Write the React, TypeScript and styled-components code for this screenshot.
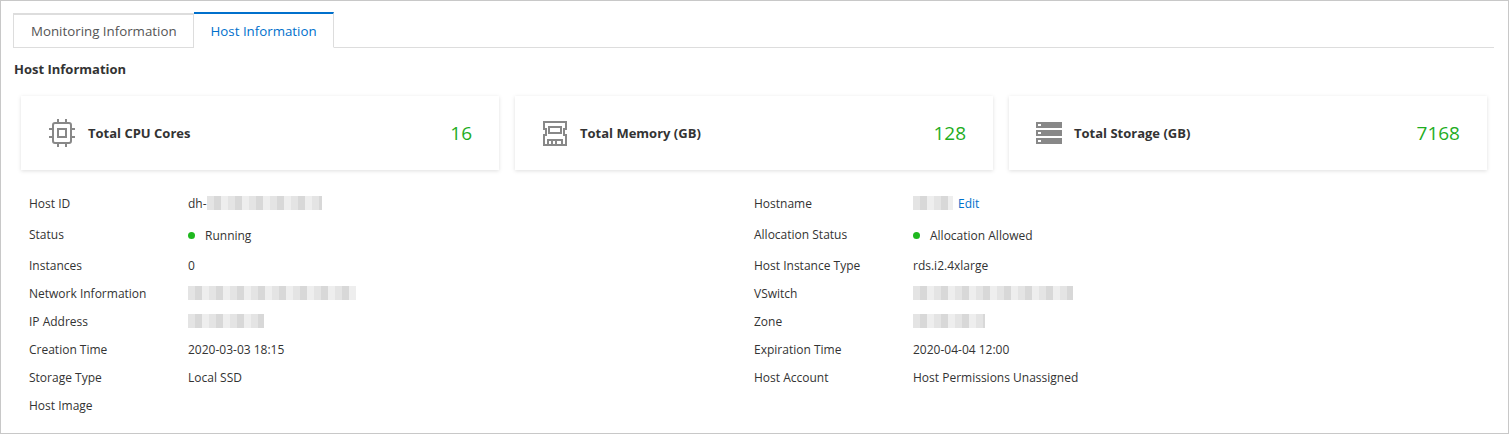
import React from 'react';
import styled, { createGlobalStyle } from 'styled-components';

const Global = createGlobalStyle`
  html, body { margin: 0; padding: 0; background: #fff; }
  body { font-family: "Segoe UI", "Open Sans", "Liberation Sans", sans-serif; color: #333; }
`;

const Frame = styled.div`
  width: 1509px;
  height: 434px;
  box-sizing: border-box;
  border: 1px solid #c8c8c8;
  padding: 11px 14px 0 12px;
  overflow: hidden;
`;

const Tabs = styled.div`
  display: flex;
  border-bottom: 1px solid #ddd;
  height: 35px;
`;

const Tab = styled.div<{ active?: boolean }>`
  box-sizing: border-box;
  padding: 0 16px 0 17px;
  display: flex;
  align-items: center;
  font-size: 13.3px;
  color: ${p => (p.active ? '#0070cc' : '#555')};
  border: 1px solid #ddd;
  border-top: 2px solid ${p => (p.active ? '#0070cc' : '#ddd')};
  border-bottom: ${p => (p.active ? '1px solid #fff' : '1px solid #ddd')};
  border-left: ${p => (p.active ? 'none' : '1px solid #ddd')};
  background: #fff;
  margin-top: ${p => (p.active ? '0' : '1px')};
  height: ${p => (p.active ? '36px' : '35px')};
`;

const Heading = styled.div`
  font-size: 13px;
  font-weight: 700;
  color: #333;
  margin: 13px 0 0 1px;
  line-height: 16px;
`;

const Cards = styled.div`
  display: grid;
  grid-template-columns: repeat(3, 478px);
  gap: 16px;
  margin: 19px 0 0 8px;
`;

const Card = styled.div`
  height: 74px;
  box-shadow: 0 1px 4px rgba(0, 0, 0, 0.13);
  display: flex;
  align-items: center;
  padding: 0 27px 0 27px;
`;

const CardTitle = styled.div`
  flex: 1;
  margin-left: 12px;
  font-size: 13px;
  font-weight: 700;
  color: #333;
`;

const CardValue = styled.div`
  font-size: 19px;
  color: #1fad1f;
`;

const Details = styled.div`
  display: grid;
  grid-template-columns: 725px 1fr;
  margin: 19px 0 0 16px;
`;

const Column = styled.div`
  display: flex;
  flex-direction: column;
`;

const Row = styled.div<{ tall?: boolean }>`
  display: flex;
  align-items: center;
  height: ${p => (p.tall ? '34px' : '28px')};
  font-size: 12px;
  color: #333;
`;

const Label = styled.div`
  width: 159px;
`;

const Value = styled.div<{ tall?: boolean }>`
  display: flex;
  align-items: center;
  margin-top: ${p => (p.tall ? '3px' : '0')};
`;

const Dot = styled.span`
  width: 7px;
  height: 7px;
  border-radius: 50%;
  background: #1fb81f;
  margin-right: 10px;
`;

const Blur = styled.span<{ w: number }>`
  display: inline-block;
  width: ${p => p.w}px;
  height: 14px;
  background:
    repeating-linear-gradient(90deg, #e4e4e4 0 7px, #d8d8d8 7px 14px, #eeeeee 14px 21px),
    #e0e0e0;
`;

const EditLink = styled.span`
  color: #0070cc;
  margin-left: 5px;
`;

const CpuIcon = () => (
  <svg width="28" height="30" viewBox="0 0 28 30" fill="none" stroke="#888" strokeWidth="2">
    <rect x="5" y="5" width="18" height="20" rx="2" />
    <rect x="10" y="11" width="8" height="8" />
    <path d="M10 1v4M18 1v4M10 25v4M18 25v4M1 11h4M1 19h4M23 11h4M23 19h4" />
  </svg>
);

const MemIcon = () => (
  <svg width="26" height="26" viewBox="0 0 26 26" fill="none" stroke="#888" strokeWidth="2">
    <path d="M2 2h22v7h-2v6h2v10H2V15h2V9H2z" />
    <rect x="7" y="7" width="12" height="6" />
    <path d="M6 25v-5h14v5M10 20v5M14 20v5" />
  </svg>
);

const StorageIcon = () => (
  <svg width="26" height="22" viewBox="0 0 26 22">
    <rect x="0" y="0" width="26" height="6" fill="#888" />
    <rect x="0" y="8" width="26" height="6" fill="#888" />
    <rect x="0" y="16" width="26" height="6" fill="#888" />
    <rect x="2" y="2" width="3" height="2" fill="#fff" />
    <rect x="2" y="10" width="3" height="2" fill="#fff" />
    <rect x="2" y="18" width="3" height="2" fill="#fff" />
  </svg>
);

const cards = [
  { icon: <CpuIcon />, title: 'Total CPU Cores', value: '16' },
  { icon: <MemIcon />, title: 'Total Memory (GB)', value: '128' },
  { icon: <StorageIcon />, title: 'Total Storage (GB)', value: '7168' },
];

export default function App() {
  return (
    <>
      <Global />
      <Frame>
        <Tabs>
          <Tab>Monitoring Information</Tab>
          <Tab active>Host Information</Tab>
        </Tabs>
        <Heading>Host Information</Heading>
        <Cards>
          {cards.map(c => (
            <Card key={c.title}>
              {c.icon}
              <CardTitle>{c.title}</CardTitle>
              <CardValue>{c.value}</CardValue>
            </Card>
          ))}
        </Cards>
        <Details>
          <Column>
            <Row><Label>Host ID</Label><Value>dh-<Blur w={115} /></Value></Row>
            <Row tall><Label>Status</Label><Value tall><Dot />Running</Value></Row>
            <Row><Label>Instances</Label><Value>0</Value></Row>
            <Row><Label>Network Information</Label><Value><Blur w={168} /></Value></Row>
            <Row><Label>IP Address</Label><Value><Blur w={76} /></Value></Row>
            <Row><Label>Creation Time</Label><Value>2020-03-03 18:15</Value></Row>
            <Row><Label>Storage Type</Label><Value>Local SSD</Value></Row>
            <Row><Label>Host Image</Label><Value /></Row>
          </Column>
          <Column>
            <Row><Label>Hostname</Label><Value><Blur w={40} /><EditLink>Edit</EditLink></Value></Row>
            <Row tall><Label>Allocation Status</Label><Value tall><Dot />Allocation Allowed</Value></Row>
            <Row><Label>Host Instance Type</Label><Value>rds.i2.4xlarge</Value></Row>
            <Row><Label>VSwitch</Label><Value><Blur w={160} /></Value></Row>
            <Row><Label>Zone</Label><Value><Blur w={72} /></Value></Row>
            <Row><Label>Expiration Time</Label><Value>2020-04-04 12:00</Value></Row>
            <Row><Label>Host Account</Label><Value>Host Permissions Unassigned</Value></Row>
          </Column>
        </Details>
      </Frame>
    </>
  );
}
